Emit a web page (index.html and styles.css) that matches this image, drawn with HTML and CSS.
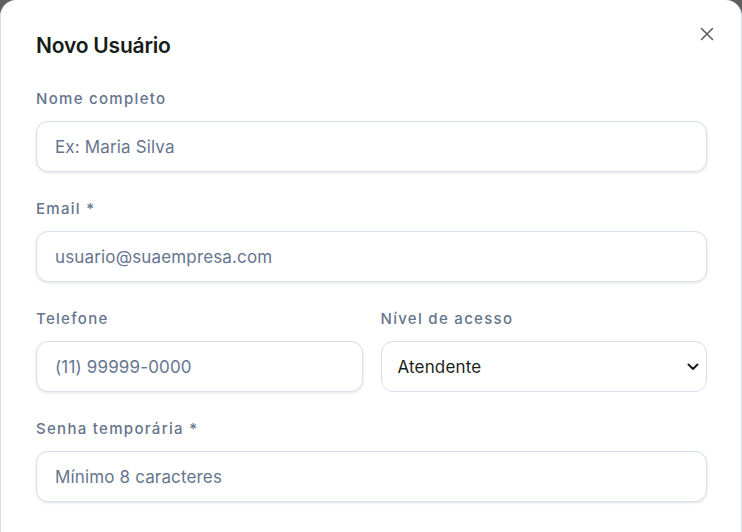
FILE: index.html
```html
<!DOCTYPE html>
<html lang="pt-BR">
<head>
<meta charset="utf-8">
<title>Novo Usuário</title>
<link rel="stylesheet" href="styles.css">
</head>
<body>
<div class="modal">
  <div class="modal-header">
    <h2 class="modal-title">Novo Usuário</h2>
    <button class="close-btn" type="button" aria-label="Fechar">
      <svg width="14" height="14" viewBox="0 0 14 14" fill="none" stroke="currentColor" stroke-width="1.5" stroke-linecap="round"><path d="M1.5 1.5L12.5 12.5M12.5 1.5L1.5 12.5"/></svg>
    </button>
  </div>
  <form class="form">
    <div class="field">
      <label class="label">Nome completo</label>
      <input class="input" type="text" placeholder="Ex: Maria Silva">
    </div>
    <div class="field">
      <label class="label">Email *</label>
      <input class="input" type="email" placeholder="usuario@suaempresa.com">
    </div>
    <div class="row">
      <div class="field">
        <label class="label">Telefone</label>
        <input class="input" type="text" placeholder="(11) 99999-0000">
      </div>
      <div class="field">
        <label class="label">Nível de acesso</label>
        <div class="select-wrap">
          <select class="input select">
            <option>Atendente</option>
            <option>Administrador</option>
          </select>
          <svg class="chevron" width="12" height="8" viewBox="0 0 12 8" fill="none" stroke="currentColor" stroke-width="2" stroke-linecap="round" stroke-linejoin="round"><path d="M1.5 1.5L6 6L10.5 1.5"/></svg>
        </div>
      </div>
    </div>
    <div class="field">
      <label class="label">Senha temporária *</label>
      <input class="input" type="password" placeholder="Mínimo 8 caracteres">
    </div>
  </form>
</div>
</body>
</html>
```
FILE: styles.css
```css
* { box-sizing: border-box; }
html, body { margin: 0; padding: 0; }
body {
  background: #5f5f5f;
  font-family: Inter, "Noto Sans", sans-serif;
  height: 532px;
  overflow: hidden;
}
.modal {
  background: #ffffff;
  border-radius: 16px 16px 0 0;
  border-left: 1px solid #d9dfea;
  border-right: 1px solid #d9dfea;
  min-height: 532px;
  padding: 31px 34px 0 35px;
}
.modal-header {
  display: flex;
  align-items: flex-start;
  justify-content: space-between;
}
.modal-title {
  margin: 0;
  font-size: 21px;
  line-height: 30px;
  font-weight: 600;
  color: #161c17;
  letter-spacing: -0.2px;
}
.close-btn {
  background: none;
  border: 0;
  padding: 0;
  margin: -4px -7px 0 0;
  width: 14px;
  height: 14px;
  color: #555a57;
  display: flex;
  cursor: pointer;
}
.form {
  display: flex;
  flex-direction: column;
  gap: 27px;
  margin-top: 28px;
}
.field {
  display: flex;
  flex-direction: column;
  gap: 12px;
  min-width: 0;
}
.row {
  display: grid;
  grid-template-columns: 1fr 1fr;
  gap: 18px;
}
.label {
  font-size: 15px;
  line-height: 20px;
  font-weight: 500;
  color: #66748d;
  letter-spacing: 1.3px;
}
.input {
  width: 100%;
  height: 51px;
  border: 1px solid #d8deec;
  border-radius: 12px;
  background: #ffffff;
  padding: 0 18px;
  font-family: Inter, "Noto Sans", sans-serif;
  font-size: 17px;
  letter-spacing: 0.15px;
  color: #1b1f1c;
  box-shadow: 0 1px 3px rgba(30, 41, 59, 0.12);
  outline: none;
}
.input::placeholder {
  color: #66758f;
  opacity: 1;
}
.select-wrap {
  position: relative;
}
.select {
  appearance: none;
  -webkit-appearance: none;
  box-shadow: none;
  color: #1b1f1c;
  padding-left: 16px;
}
.chevron {
  position: absolute;
  right: 8px;
  top: 22px;
  color: #1b1f1c;
  pointer-events: none;
}
```
